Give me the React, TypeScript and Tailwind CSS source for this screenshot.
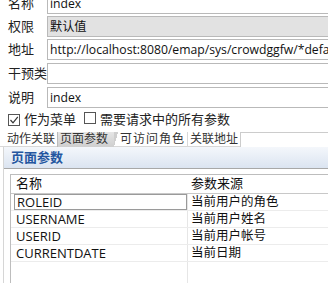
import React from "react";

const font = { fontFamily: '"Open Sans", "Noto Sans CJK SC", sans-serif' };

function Field({ label, value, gray, mt }: { label: string; value?: string; gray?: boolean; mt: string }) {
  return (
    <div className={`flex items-center ${mt}`}>
      <div className="w-[47px] shrink-0 pl-[8px] text-[13px] text-[#222]">{label}</div>
      <div
        className={`h-[21px] w-[320px] shrink-0 overflow-hidden whitespace-nowrap border border-[#b9b9b9] pl-[2px] text-[12.2px] leading-[19px] text-[#111] ${
          gray ? "bg-[#e2e2e2]" : "bg-white"
        }`}
      >
        {value}
      </div>
    </div>
  );
}

function Box({ checked }: { checked?: boolean }) {
  return (
    <span className="inline-flex h-[12px] w-[12px] items-center justify-center border border-[#555] bg-white">
      {checked && (
        <svg width="10" height="10" viewBox="0 0 10 10" fill="none" stroke="#333" strokeWidth="1.2">
          <path d="M1.5 5 L4 7.8 L8.8 1.8" />
        </svg>
      )}
    </span>
  );
}

const rows = [
  ["ROLEID", "当前用户的角色"],
  ["USERNAME", "当前用户姓名"],
  ["USERID", "当前用户帐号"],
  ["CURRENTDATE", "当前日期"],
];

export default function App() {
  return (
    <div className="h-[283px] w-[328px] overflow-hidden bg-white" style={font}>
      <Field label="名称" value="index" mt="mt-[-7px]" />
      <Field label="权限" value="默认值" gray mt="mt-[2px]" />
      <Field label="地址" value="http://localhost:8080/emap/sys/crowdggfw/*default/index.do" mt="mt-[2px]" />
      <Field label="干预类" mt="mt-[3px]" />
      <Field label="说明" mt="mt-[3px]" value="index" />

      <div className="mt-[3px] flex h-[18px] items-center pl-[8px] text-[13px] text-[#222]">
        <Box checked />
        <span className="ml-[4px]">作为菜单</span>
        <span className="ml-[8px]">
          <Box />
        </span>
        <span className="ml-[4px]">需要请求中的所有参数</span>
      </div>

      <div className="mt-[3px] flex h-[15px] items-stretch text-[12px] leading-[14px] text-[#333]">
        <div className="w-[3px] border-b border-[#d8d8d8]" />
        <div className="border-b border-[#d8d8d8] pl-[4px] pr-[2px]">动作关联</div>
        <div className="relative border-l border-[#bbb] bg-gradient-to-b from-[#e6e6e6] to-[#cfcfcf] pl-[2px] pr-[6px]">
          页面参数
          <span className="absolute right-[-4px] top-0 h-[15px] w-[4px] bg-[linear-gradient(to_bottom_right,#cfcfcf_50%,transparent_50%)]" />
        </div>
        <div className="border-b border-[#d8d8d8] pl-[6px] pr-[2px] tracking-[1px]">可访问角色</div>
        <div className="border-b border-l border-[#d8d8d8] pl-[2px] pr-[2px]">关联地址</div>
        <div className="flex-1 border-l border-t border-[#ccc]" />
      </div>

      <div className="ml-[3px] border-l border-[#d6d6d6]">
        <div className="flex h-[22px] items-center border-b border-[#a8a8a8] bg-gradient-to-b from-[#f4f7fb] to-[#dbe4f1] pl-[7px] text-[13px] font-bold text-[#2456a0]">
          页面参数
        </div>
        <div className="ml-[6px] mt-[5px] border-l border-t border-[#bdbdbd] text-[13px] text-[#111]">
          <div className="flex h-[19px] items-center border-b border-[#c8c8c8]">
            <div className="w-[177px] pl-[5px]">名称</div>
            <div className="flex-1 pl-[3px]">参数来源</div>
          </div>
          {rows.map(([a, b], i) => (
            <div key={a} className="flex h-[17px] items-stretch border-b border-[#ececec]">
              <div className="flex w-[177px] border-r border-[#e6e6e6]">
                {i === 0 ? (
                  <div className="ml-[3px] flex flex-1 items-center border border-[#9a9a9a] pl-[2px] leading-[14px]">{a}</div>
                ) : (
                  <div className="flex items-center pl-[5px] leading-[16px]">{a}</div>
                )}
              </div>
              <div className="flex flex-1 items-center pl-[3px] text-[12.5px] leading-[16px]">{b}</div>
            </div>
          ))}
          <div className="flex h-[24px]">
            <div className="w-[177px] border-r border-[#e6e6e6]" />
          </div>
        </div>
      </div>
    </div>
  );
}
